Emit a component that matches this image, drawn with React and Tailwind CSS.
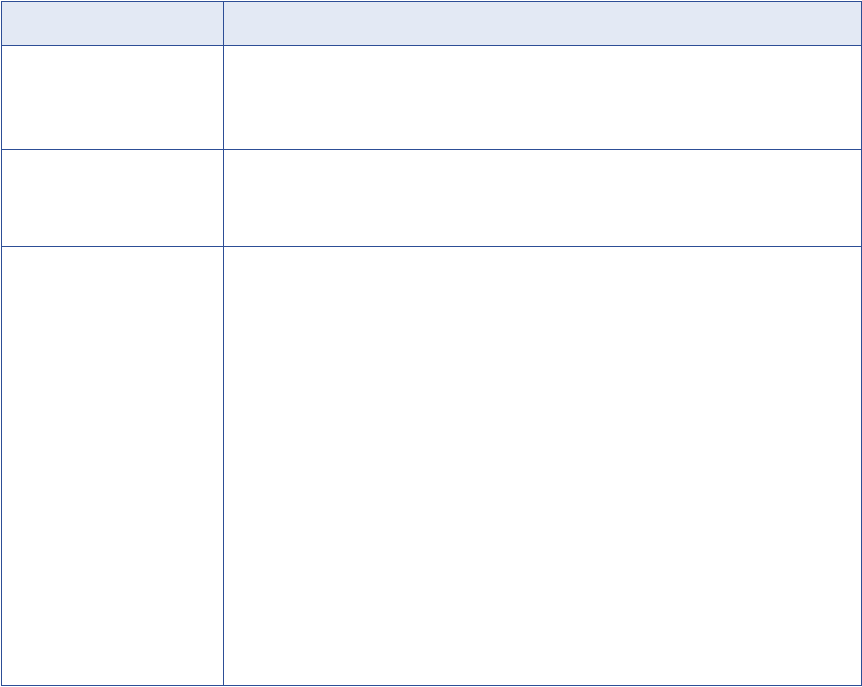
export default function App() {
  const rows = ['h-[104px]', 'h-[97px]', 'flex-1'];

  return (
    <div className="h-[687px] w-[862px] bg-white pl-px pt-px">
      <div className="flex h-[685px] w-[861px] flex-col border border-[#2d4e96]">
        <div className="flex h-[44px] border-b border-[#2d4e96] bg-[#e3e9f4]">
          <div className="w-[222px] border-r border-[#2d4e96]" />
          <div className="flex-1" />
        </div>
        {rows.map((h, i) => (
          <div
            key={i}
            className={`flex ${h} ${i < rows.length - 1 ? 'border-b border-[#2d4e96]' : ''}`}
          >
            <div className="w-[222px] border-r border-[#2d4e96]" />
            <div className="flex-1" />
          </div>
        ))}
      </div>
    </div>
  );
}
